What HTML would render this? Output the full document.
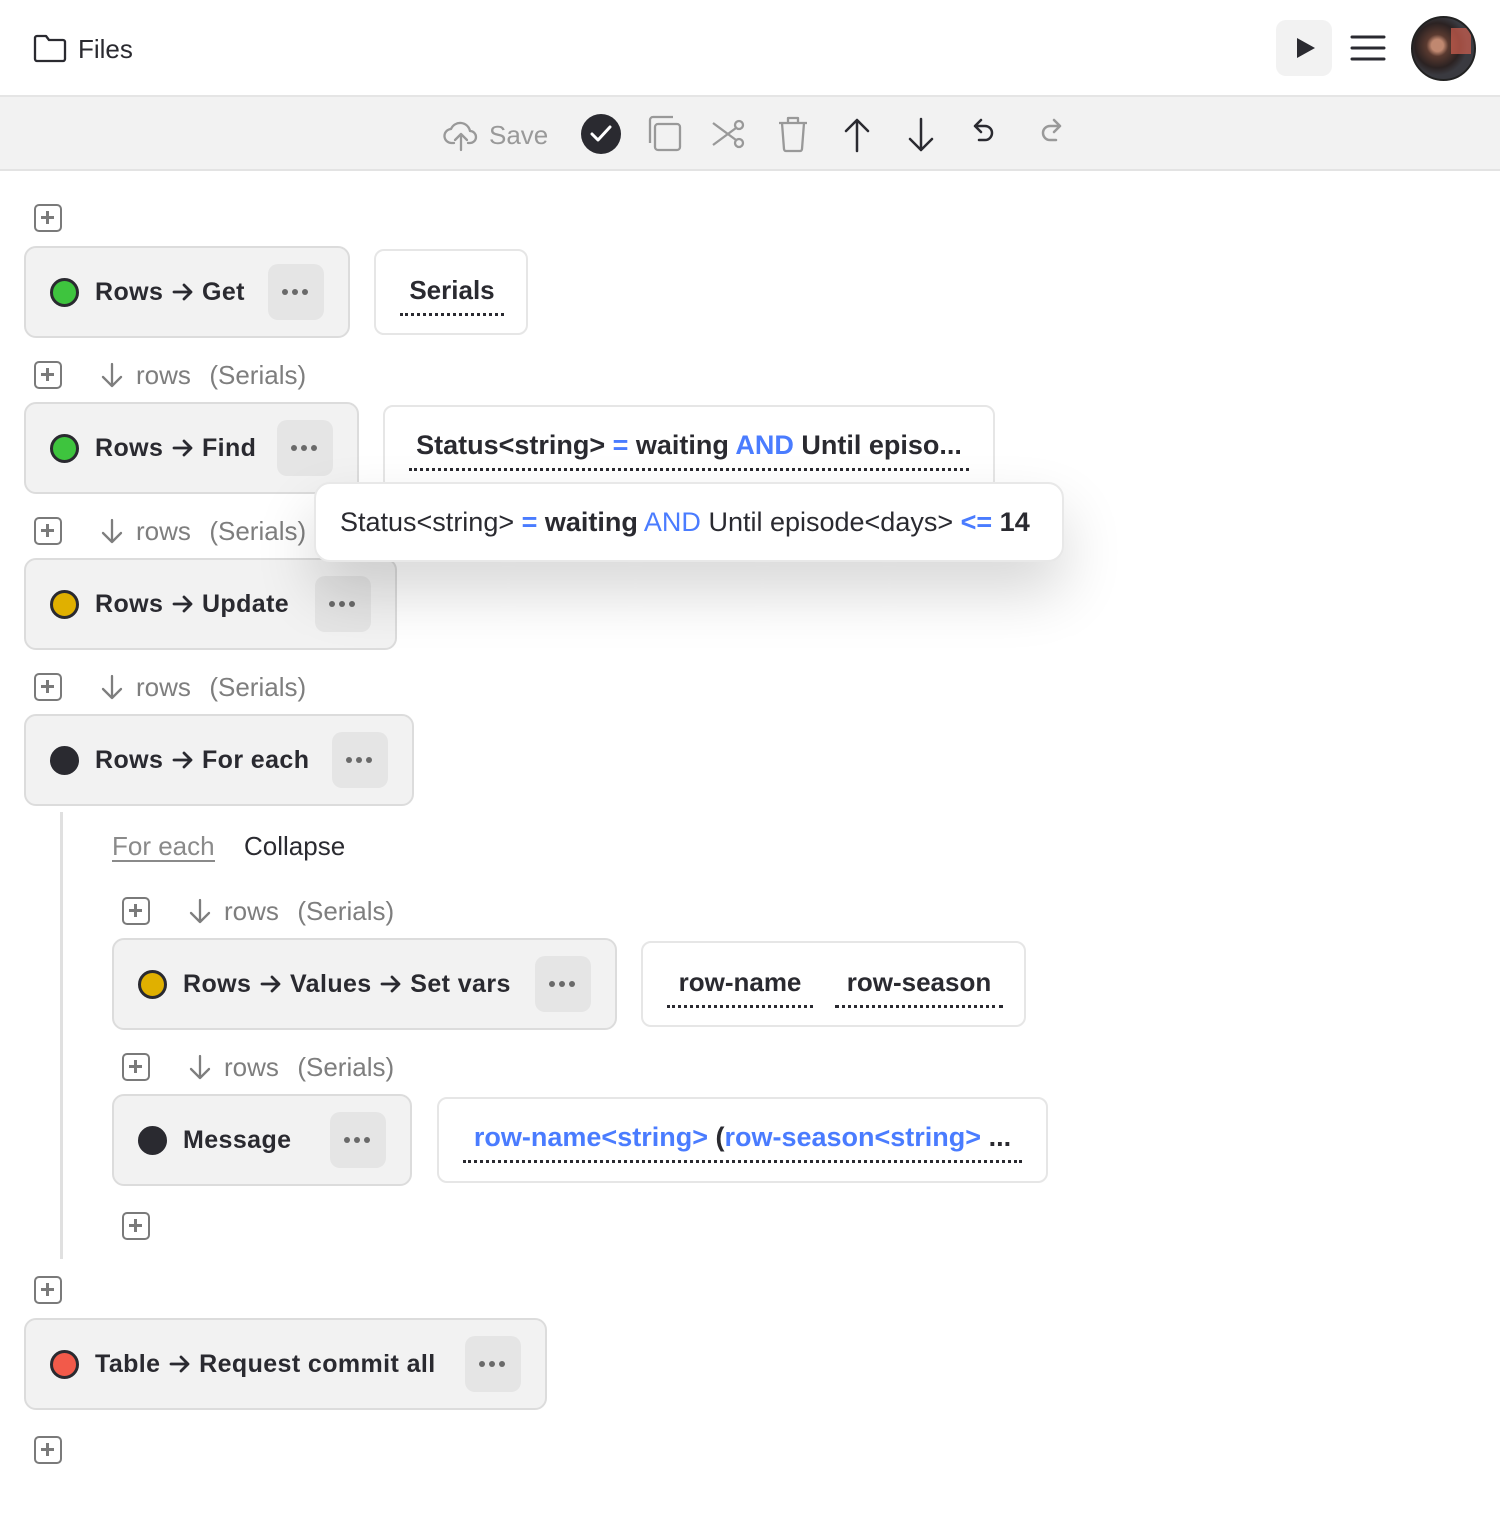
<!DOCTYPE html>
<html><head><meta charset="utf-8"><style>
*{box-sizing:border-box;margin:0;padding:0}
body{width:1500px;height:1524px;background:#fff;font-family:"Liberation Sans",sans-serif;color:#2a2a30;position:relative;overflow:hidden}
.a{position:absolute}
.ar{display:inline-block;width:22px;height:18px;margin:0 1px;vertical-align:-1px}
.hdr{left:0;top:0;width:1500px;height:97px;border-bottom:2px solid #e5e5e5}
.tb{left:0;top:97px;width:1500px;height:74px;background:#f2f2f2;border-bottom:2px solid #e3e3e3}
.plus{width:28px;height:28px;border:2.5px solid #7a7a7a;border-radius:5px}
.plus:before{content:"";position:absolute;left:5px;top:10px;width:13px;height:2.5px;background:#7a7a7a}
.plus:after{content:"";position:absolute;left:10px;top:5px;width:2.5px;height:13px;background:#7a7a7a}
.card{background:#f2f2f2;border:2px solid #dcdcdc;border-radius:12px;height:92px}
.card .dot{position:absolute;left:24px;top:30px;width:29px;height:29px;border-radius:50%;border:3.5px solid #2a2a30}
.card .lbl{position:absolute;left:69px;top:30px;font-size:25px;font-weight:bold;white-space:nowrap;letter-spacing:0.4px}
.card .more{position:absolute;top:16px;width:56px;height:56px;background:#e5e5e5;border-radius:10px}
.more:before{content:"";position:absolute;left:14px;top:25px;width:6px;height:6px;border-radius:50%;background:#6a6a6a;box-shadow:10px 0 #6a6a6a,20px 0 #6a6a6a}
.box{background:#fff;border:2px solid #e6e6e6;border-radius:10px;height:86px}
.box .t{position:absolute;top:24px;font-size:26px;font-weight:bold;white-space:nowrap;border-bottom:3px dotted #2a2a30;padding-bottom:7px;text-align:center}
.rows{font-size:26px;color:#7e7e7e;white-space:nowrap;word-spacing:2px}
.blue{color:#4a7cff}
</style></head><body>
<svg width="0" height="0" style="position:absolute"><symbol id="arr" viewBox="0 0 22 18"><path d="M2 9H19M12 2l7 7-7 7" fill="none" stroke="#2a2a30" stroke-width="2.8" stroke-linecap="round" stroke-linejoin="round"/></symbol></svg>
<div class="a hdr"></div>
<svg class="a" style="left:33px;top:33px" width="34" height="30" viewBox="0 0 34 30"><path d="M2 5a2 2 0 0 1 2-2h9l3 4h14a2 2 0 0 1 2 2v17a2 2 0 0 1-2 2H4a2 2 0 0 1-2-2z" fill="none" stroke="#2a2a30" stroke-width="2.3" stroke-linejoin="round"/></svg>
<div class="a" style="left:78px;top:34px;font-size:26px">Files</div>
<div class="a" style="left:1276px;top:20px;width:56px;height:56px;background:#f2f2f2;border-radius:10px"></div>
<svg class="a" style="left:1296px;top:37px" width="20" height="22"><path d="M1 1L19 11L1 21Z" fill="#2a2a30"/></svg>
<svg class="a" style="left:1350px;top:34px" width="36" height="28"><path d="M2 3H34M2 14H34M2 25H34" stroke="#2a2a30" stroke-width="3" stroke-linecap="round"/></svg>
<div class="a" style="left:1411px;top:16px;width:65px;height:65px;border-radius:50%;border:2px solid #222;background:radial-gradient(circle at 40% 45%,#c08870 0 12%,#5a3a30 22%,#2b2222 45%,#3a3a40 60%),linear-gradient(#a05040,#222);overflow:hidden"><div class="a" style="left:38px;top:10px;width:20px;height:26px;background:#d06050;opacity:.7"></div></div>

<div class="a tb"></div>
<svg class="a" style="left:443px;top:118px" width="36" height="34" viewBox="0 0 36 34" fill="none" stroke="#999" stroke-width="2.3" stroke-linecap="round" stroke-linejoin="round"><path d="M11 25H9a7 7 0 0 1-1-14 10 10 0 0 1 19 2 6 6 0 0 1 0 12h-2"/><path d="M18 32V17M12 22l6-6 6 6"/></svg>
<div class="a" style="left:489px;top:120px;font-size:26px;color:#999">Save</div>
<div class="a" style="left:581px;top:114px;width:40px;height:40px;border-radius:50%;background:#2a2a30"></div>
<svg class="a" style="left:589px;top:123px" width="24" height="22"><path d="M3 11l6 6L21 4" fill="none" stroke="#fff" stroke-width="3" stroke-linecap="round" stroke-linejoin="round"/></svg>
<svg class="a" style="left:647px;top:115px" width="36" height="38" fill="none" stroke="#999" stroke-width="2.3"><rect x="8" y="9" width="25" height="26" rx="3"/><path d="M3 28V5a3 3 0 0 1 3-3h20"/></svg>
<svg class="a" style="left:711px;top:117px" width="36" height="34" fill="none" stroke="#999" stroke-width="2.3"><circle cx="28" cy="8" r="4"/><circle cx="28" cy="26" r="4"/><path d="M2 6l23 17M2 28l23-17"/></svg>
<svg class="a" style="left:777px;top:115px" width="32" height="38" fill="none" stroke="#999" stroke-width="2.3" stroke-linejoin="round"><path d="M2 8h28M11 8V3h10v5M5 8l2 26a2 2 0 0 0 2 2h14a2 2 0 0 0 2-2l2-26"/></svg>
<svg class="a" style="left:843px;top:117px" width="28" height="36" fill="none" stroke="#2a2a30" stroke-width="2.5" stroke-linecap="round" stroke-linejoin="round"><path d="M14 34V3M3 14L14 3l11 11"/></svg>
<svg class="a" style="left:907px;top:117px" width="28" height="36" fill="none" stroke="#2a2a30" stroke-width="2.5" stroke-linecap="round" stroke-linejoin="round"><path d="M14 2v31M3 22l11 11 11-11"/></svg>
<svg class="a" style="left:971px;top:117px" width="28" height="34" fill="none" stroke="#2a2a30" stroke-width="2.5" stroke-linecap="round" stroke-linejoin="round"><path d="M10 3L4 9l6 6M4 9h10a7 7 0 0 1 0 14H8"/></svg>
<svg class="a" style="left:1036px;top:117px" width="28" height="34" fill="none" stroke="#999" stroke-width="2.5" stroke-linecap="round" stroke-linejoin="round"><path d="M18 3l6 6-6 6M24 9H14a7 7 0 0 0 0 14h6"/></svg>

<div class="a plus" style="left:34px;top:204px"></div>

<div class="a card" style="left:24px;top:246px;width:326px"><div class="dot" style="background:#3ec43e"></div><div class="lbl">Rows <svg class="ar"><use href="#arr"/></svg> Get</div><div class="more" style="left:242px"></div></div>
<div class="a box" style="left:374px;top:249px;width:154px"><div class="t" style="left:24px;width:104px">Serials</div></div>

<div class="a plus" style="left:34px;top:361px"></div>
<svg class="a" style="left:100px;top:362px" width="24" height="26" fill="none" stroke="#7e7e7e" stroke-width="2.3" stroke-linecap="round" stroke-linejoin="round"><path d="M12 2v22M3 15l9 9 9-9"/></svg>
<div class="a rows" style="left:136px;top:360px">rows&nbsp;&nbsp;(Serials)</div>

<div class="a card" style="left:24px;top:402px;width:335px"><div class="dot" style="background:#3ec43e"></div><div class="lbl">Rows <svg class="ar"><use href="#arr"/></svg> Find</div><div class="more" style="left:251px"></div></div>
<div class="a box" style="left:383px;top:405px;width:612px"><div class="t" style="left:24px;right:24px;font-size:27px;top:23px">Status&lt;string&gt; <span class="blue">=</span> waiting <span class="blue">AND</span> Until episo...</div></div>

<div class="a plus" style="left:34px;top:517px"></div>
<svg class="a" style="left:100px;top:518px" width="24" height="26" fill="none" stroke="#7e7e7e" stroke-width="2.3" stroke-linecap="round" stroke-linejoin="round"><path d="M12 2v22M3 15l9 9 9-9"/></svg>
<div class="a rows" style="left:136px;top:516px">rows&nbsp;&nbsp;(Serials)</div>

<div class="a card" style="left:24px;top:558px;width:373px"><div class="dot" style="background:#e0b000"></div><div class="lbl">Rows <svg class="ar"><use href="#arr"/></svg> Update</div><div class="more" style="left:289px"></div></div>

<div class="a plus" style="left:34px;top:673px"></div>
<svg class="a" style="left:100px;top:674px" width="24" height="26" fill="none" stroke="#7e7e7e" stroke-width="2.3" stroke-linecap="round" stroke-linejoin="round"><path d="M12 2v22M3 15l9 9 9-9"/></svg>
<div class="a rows" style="left:136px;top:672px">rows&nbsp;&nbsp;(Serials)</div>

<div class="a card" style="left:24px;top:714px;width:390px"><div class="dot" style="background:#2a2a30"></div><div class="lbl">Rows <svg class="ar"><use href="#arr"/></svg> For each</div><div class="more" style="left:306px"></div></div>

<div class="a" style="left:60px;top:812px;width:3px;height:447px;background:#e0e0e0"></div>
<div class="a" style="left:112px;top:832px;font-size:26px;color:#8a8a8a;border-bottom:2px solid #8a8a8a;line-height:28px">For each</div>
<div class="a" style="left:244px;top:832px;font-size:26px;line-height:28px">Collapse</div>

<div class="a plus" style="left:122px;top:897px"></div>
<svg class="a" style="left:188px;top:898px" width="24" height="26" fill="none" stroke="#7e7e7e" stroke-width="2.3" stroke-linecap="round" stroke-linejoin="round"><path d="M12 2v22M3 15l9 9 9-9"/></svg>
<div class="a rows" style="left:224px;top:896px">rows&nbsp;&nbsp;(Serials)</div>

<div class="a card" style="left:112px;top:938px;width:505px"><div class="dot" style="background:#e0b000"></div><div class="lbl">Rows <svg class="ar"><use href="#arr"/></svg> Values <svg class="ar"><use href="#arr"/></svg> Set vars</div><div class="more" style="left:421px"></div></div>
<div class="a box" style="left:641px;top:941px;width:385px"><div class="t" style="left:24px;width:146px">row-name</div><div class="t" style="left:192px;width:168px">row-season</div></div>

<div class="a plus" style="left:122px;top:1053px"></div>
<svg class="a" style="left:188px;top:1054px" width="24" height="26" fill="none" stroke="#7e7e7e" stroke-width="2.3" stroke-linecap="round" stroke-linejoin="round"><path d="M12 2v22M3 15l9 9 9-9"/></svg>
<div class="a rows" style="left:224px;top:1052px">rows&nbsp;&nbsp;(Serials)</div>

<div class="a card" style="left:112px;top:1094px;width:300px"><div class="dot" style="background:#2a2a30"></div><div class="lbl">Message</div><div class="more" style="left:216px"></div></div>
<div class="a box" style="left:437px;top:1097px;width:611px"><div class="t" style="left:24px;right:24px;font-size:27px;top:23px"><span class="blue">row-name&lt;string&gt;</span> (<span class="blue">row-season&lt;string&gt;</span> ...</div></div>

<div class="a plus" style="left:122px;top:1212px"></div>
<div class="a plus" style="left:34px;top:1276px"></div>

<div class="a card" style="left:24px;top:1318px;width:523px"><div class="dot" style="background:#f25a4a"></div><div class="lbl">Table <svg class="ar"><use href="#arr"/></svg> Request commit all</div><div class="more" style="left:439px"></div></div>

<div class="a plus" style="left:34px;top:1436px"></div>

<div class="a" style="left:314px;top:482px;width:750px;height:80px;background:#fff;border:2px solid #e8e8e8;border-radius:16px;box-shadow:0 30px 60px rgba(0,0,0,0.16);font-size:27px;padding:23px 0 0 24px;white-space:nowrap">Status&lt;string&gt; <b class="blue">=</b> <b>waiting</b> <span class="blue">AND</span> Until episode&lt;days&gt; <b class="blue">&lt;=</b> <b>14</b></div>
</body></html>
